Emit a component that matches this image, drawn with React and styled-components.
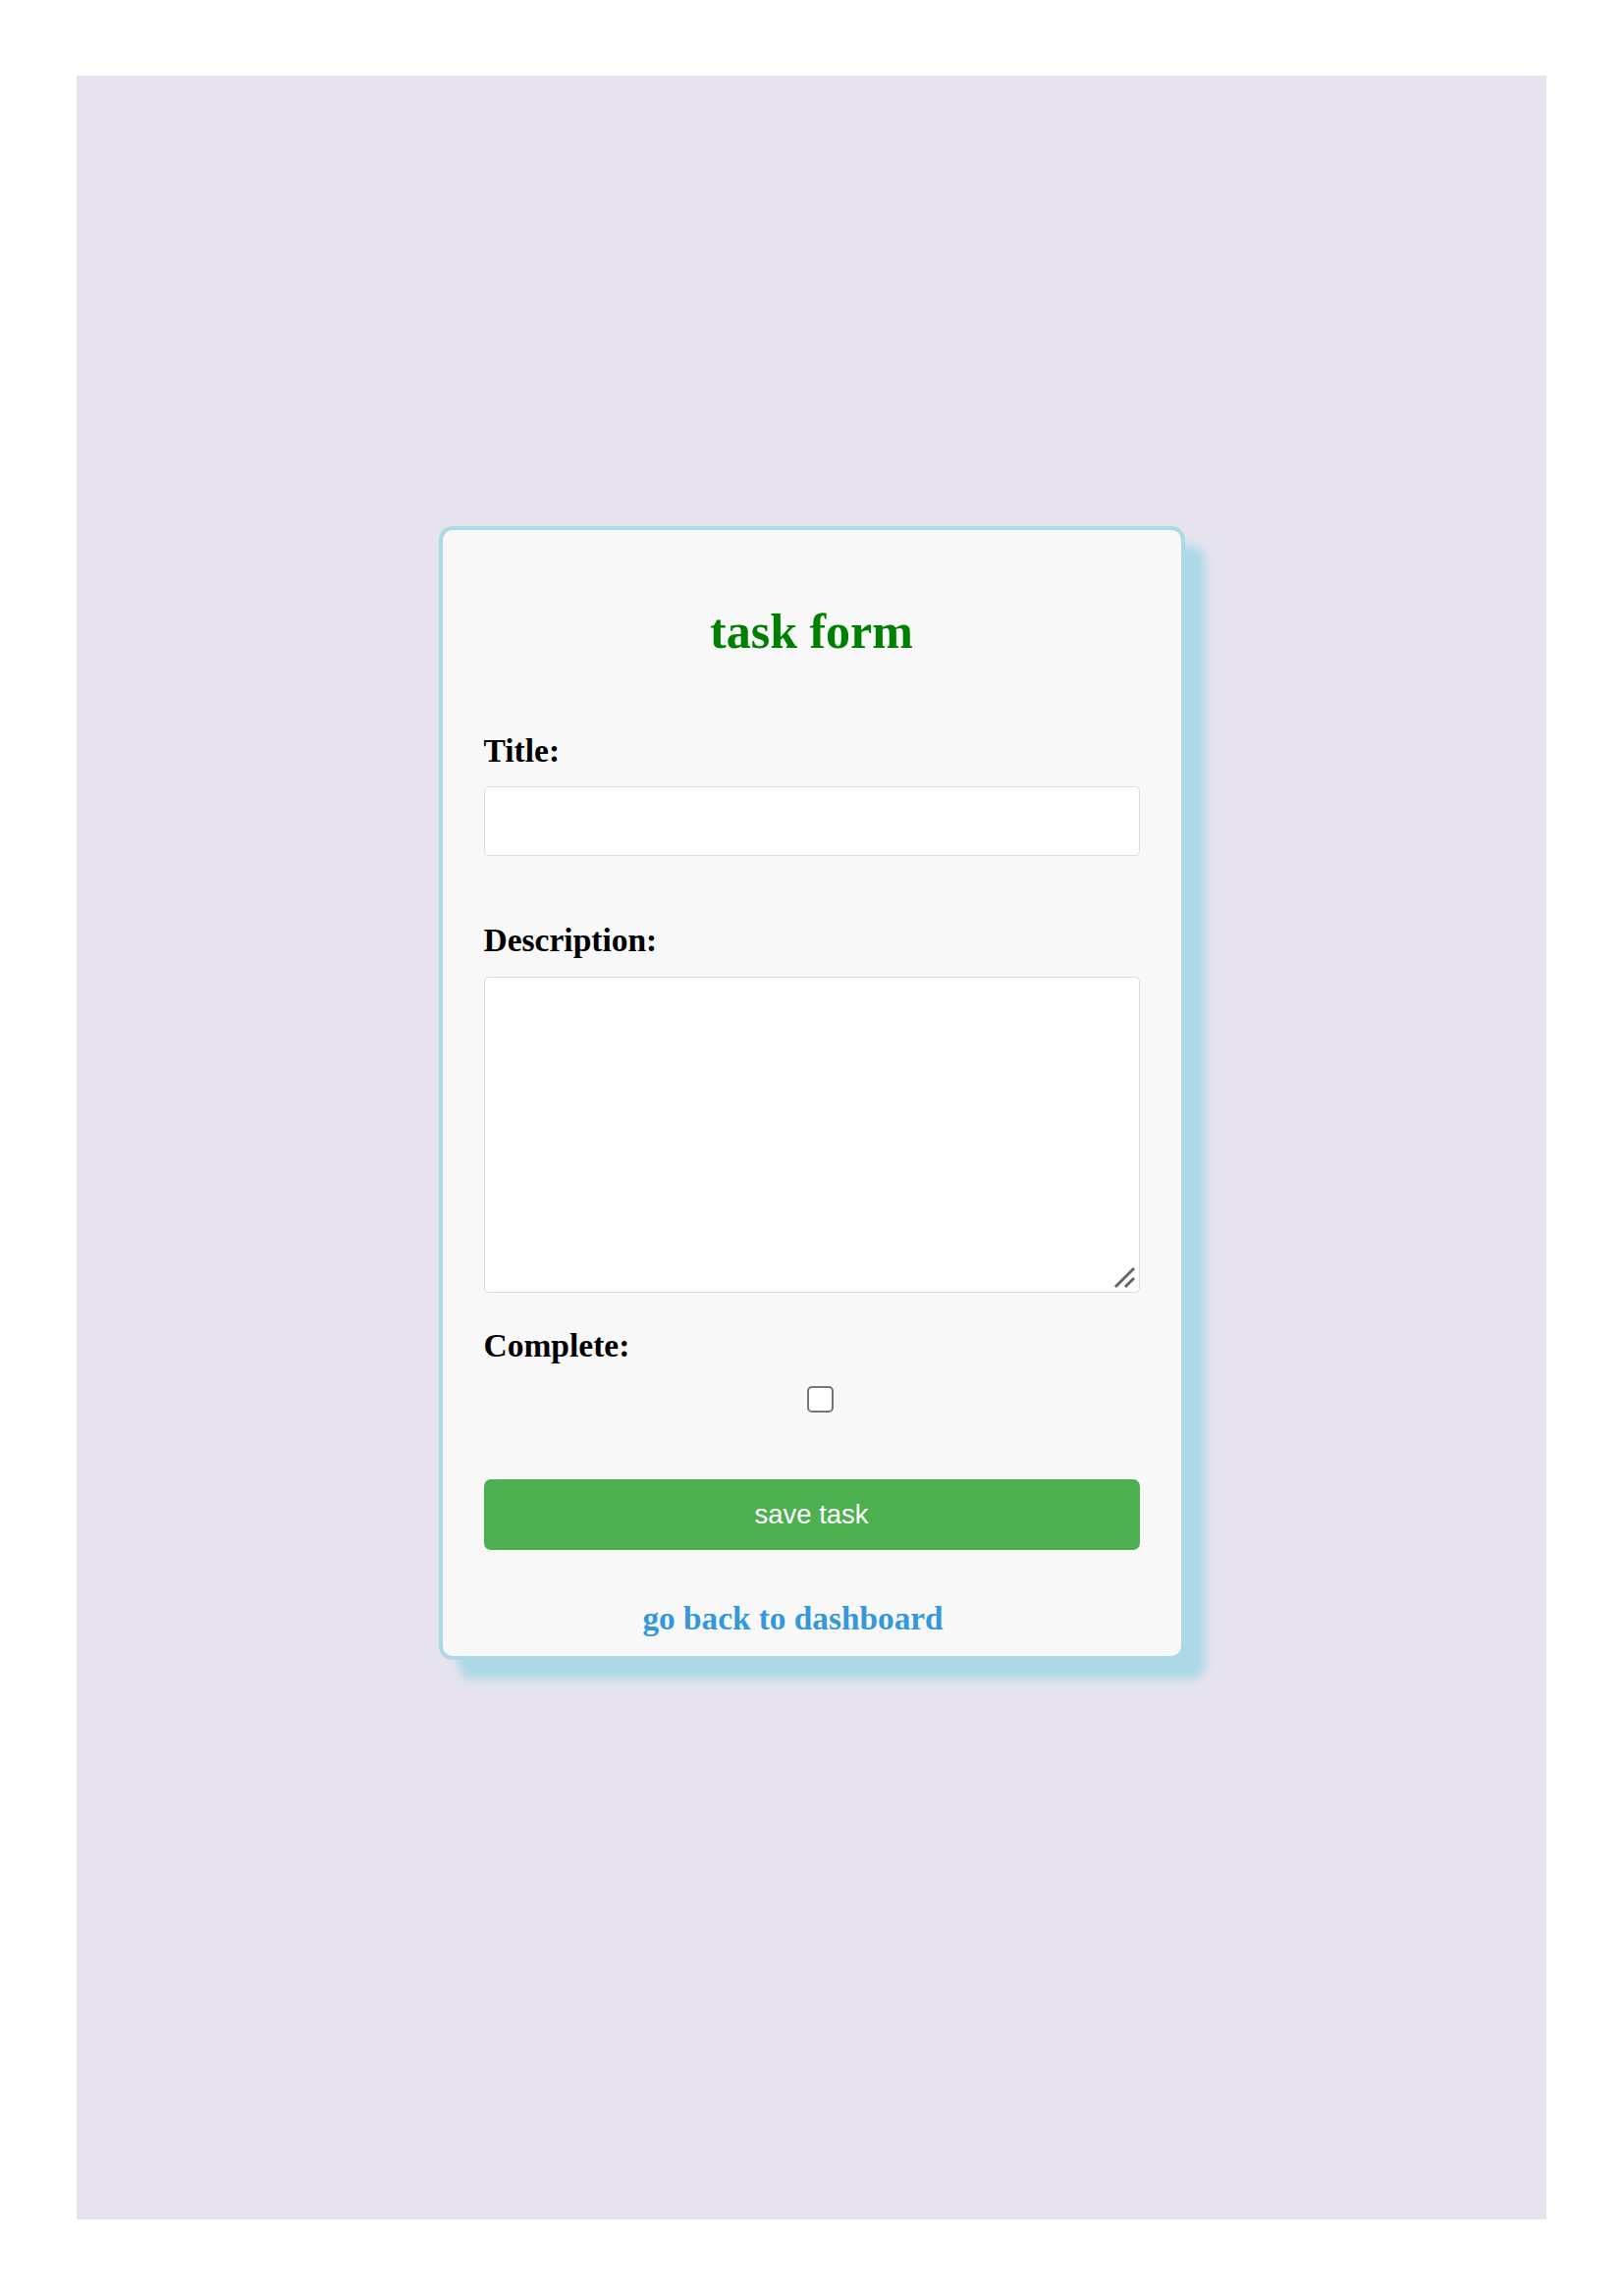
import styled, { createGlobalStyle } from "styled-components";

const GlobalStyle = createGlobalStyle`
  html, body {
    margin: 0;
    padding: 0;
    background: #ffffff;
  }
  body {
    font-family: "Liberation Serif", "Times New Roman", serif;
  }
  * {
    box-sizing: border-box;
  }
`;

const ResizeGrip = () => (
  <Grip width="24" height="24" viewBox="0 0 24 24">
    <path d="M3 22 L22 3 M13 22 L22 13" stroke="#666666" strokeWidth="3" fill="none" />
  </Grip>
);

const TaskForm = () => {
  return (
    <Page>
      <GlobalStyle />
      <Backdrop>
        <Card>
          <Heading>task form</Heading>

          <Label htmlFor="title">Title:</Label>
          <TextInput id="title" type="text" />

          <Label htmlFor="description" $gapTop={68}>
            Description:
          </Label>
          <AreaWrap>
            <TextArea id="description" />
            <ResizeGrip />
          </AreaWrap>

          <Label htmlFor="complete" $gapTop={36}>
            Complete:
          </Label>
          <CheckRow>
            <Check id="complete" type="checkbox" />
          </CheckRow>

          <SaveButton type="button">save task</SaveButton>

          <BackLink href="#">go back to dashboard</BackLink>
        </Card>
      </Backdrop>
    </Page>
  );
};

export default TaskForm;

const Page = styled.div`
  padding: 77px 78px 78px;
  min-height: 2339px;
`;

const Backdrop = styled.main`
  background: #e6e3ee;
  height: 2184px;
  display: flex;
  justify-content: center;
  align-items: flex-start;
  padding-top: 459px;
`;

const Card = styled.form`
  width: 760px;
  display: flex;
  flex-direction: column;
  padding: 76px 42px 20px;
  background: #f8f8f8;
  border: 4px solid #add8e6;
  border-radius: 14px;
  box-shadow: 20px 20px 10px #add8e6;
`;

const Heading = styled.h2`
  margin: 0 0 76px;
  font-size: 50px;
  line-height: 55px;
  font-weight: bold;
  color: #008000;
  text-align: center;
`;

const Label = styled.label`
  display: block;
  margin: ${(p) => p.$gapTop || 0}px 0 0;
  font-size: 33.5px;
  line-height: 36px;
  font-weight: bold;
  color: #000000;
`;

const TextInput = styled.input`
  display: block;
  width: 100%;
  height: 71px;
  margin-top: 18px;
  padding: 10px 14px;
  background: #ffffff;
  border: 1px solid #dddddd;
  border-radius: 5px;
  font-size: 24px;
  outline: none;
`;

const AreaWrap = styled.div`
  position: relative;
  margin-top: 19px;
`;

const TextArea = styled.textarea`
  display: block;
  width: 100%;
  height: 322px;
  padding: 10px 14px;
  background: #ffffff;
  border: 1px solid #dddddd;
  border-radius: 5px;
  font-size: 24px;
  outline: none;
  resize: none;
`;

const Grip = styled.svg`
  position: absolute;
  right: 4px;
  bottom: 4px;
  pointer-events: none;
`;

const CheckRow = styled.div`
  display: flex;
  justify-content: center;
  padding-left: 17px;
  margin-top: 23px;
`;

const Check = styled.input`
  appearance: none;
  width: 27px;
  height: 27px;
  margin: 0;
  background: #ffffff;
  border: 2px solid #767676;
  border-radius: 5px;
`;

const SaveButton = styled.button`
  margin-top: 68px;
  height: 72px;
  width: 100%;
  background: #4caf50;
  color: #ffffff;
  border: none;
  border-radius: 7px;
  font-family: "Liberation Sans", Arial, sans-serif;
  font-size: 27.5px;
  cursor: pointer;
`;

const BackLink = styled.a`
  display: block;
  margin-top: 51px;
  padding-right: 38px;
  text-align: center;
  font-size: 33.3px;
  line-height: 37px;
  font-weight: bold;
  color: #3498db;
  text-decoration: none;
`;
